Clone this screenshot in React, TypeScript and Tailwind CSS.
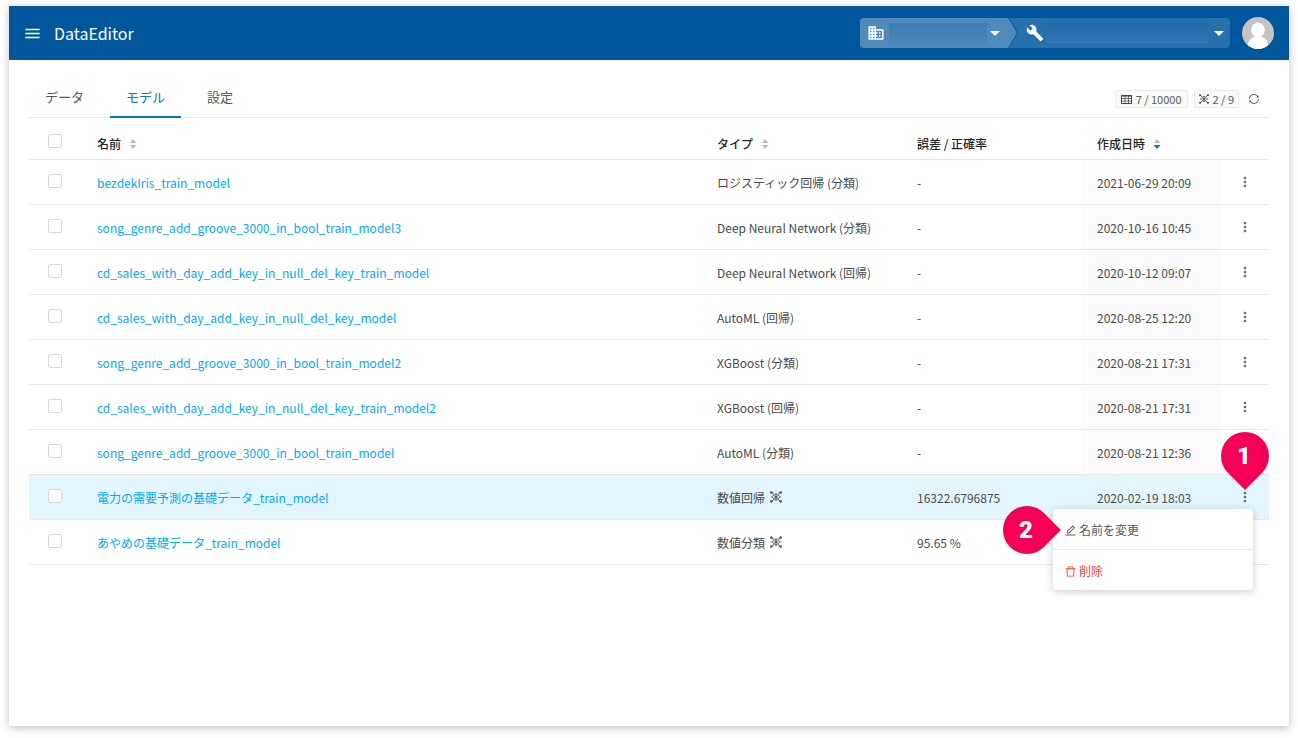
import clsx from 'clsx';
import { MdBusiness, MdBuild, MdMenu, MdMoreVert } from 'react-icons/md';
import { AiOutlineDelete, AiOutlineEdit, AiOutlineSync } from 'react-icons/ai';

type Model = {
  name: string;
  type: string;
  score: string;
  createdAt: string;
  network?: boolean;
  menuOpen?: boolean;
};

const models: Model[] = [
  { name: 'bezdekIris_train_model', type: 'ロジスティック回帰 (分類)', score: '-', createdAt: '2021-06-29 20:09' },
  { name: 'song_genre_add_groove_3000_in_bool_train_model3', type: 'Deep Neural Network (分類)', score: '-', createdAt: '2020-10-16 10:45' },
  { name: 'cd_sales_with_day_add_key_in_null_del_key_train_model', type: 'Deep Neural Network (回帰)', score: '-', createdAt: '2020-10-12 09:07' },
  { name: 'cd_sales_with_day_add_key_in_null_del_key_model', type: 'AutoML (回帰)', score: '-', createdAt: '2020-08-25 12:20' },
  { name: 'song_genre_add_groove_3000_in_bool_train_model2', type: 'XGBoost (分類)', score: '-', createdAt: '2020-08-21 17:31' },
  { name: 'cd_sales_with_day_add_key_in_null_del_key_train_model2', type: 'XGBoost (回帰)', score: '-', createdAt: '2020-08-21 17:31' },
  { name: 'song_genre_add_groove_3000_in_bool_train_model', type: 'AutoML (分類)', score: '-', createdAt: '2020-08-21 12:36' },
  { name: '電力の需要予測の基礎データ_train_model', type: '数値回帰', score: '16322.6796875', createdAt: '2020-02-19 18:03', network: true, menuOpen: true },
  { name: 'あやめの基礎データ_train_model', type: '数値分類', score: '95.65 %', createdAt: '', network: true },
];

function NetworkIcon({ className }: { className?: string }) {
  return (
    <svg viewBox="0 0 12 12" className={className} fill="none" stroke="currentColor" aria-hidden="true">
      <path d="M1 1l3.4 3M11 1L7.6 4M1 11l3.4-3M11 11L7.6 8" strokeWidth="1" />
      <path d="M1.5 6L6 3l4.5 3L6 9z" strokeWidth="0.8" />
      <g fill="currentColor" stroke="none">
        <circle cx="1.3" cy="1.5" r="1.2" />
        <circle cx="10.7" cy="1.5" r="1.2" />
        <circle cx="1.3" cy="10.5" r="1.2" />
        <circle cx="10.7" cy="10.5" r="1.2" />
        <circle cx="6" cy="6" r="1.5" />
        <circle cx="6" cy="3" r="0.8" />
        <circle cx="6" cy="9" r="0.8" />
      </g>
    </svg>
  );
}

function TableIcon() {
  return (
    <svg viewBox="0 0 11 9" className="h-[9px] w-[11px]" fill="none" stroke="#444" aria-hidden="true">
      <path d="M.5 .5h10v8h-10zM0 1h11" />
      <path d="M0 3.5h11M0 6h11M4 0v9M7.5 0v9" strokeWidth="0.7" />
    </svg>
  );
}

function SortIcon({ active }: { active?: boolean }) {
  return (
    <svg viewBox="0 0 8 10" className="h-[10px] w-2" aria-hidden="true">
      <path d="M4 0l3.5 4h-7z" fill="#bfbfbf" />
      <path d="M4 10L.5 6h7z" fill={active ? '#0277bd' : '#bfbfbf'} />
    </svg>
  );
}

function Caret() {
  return (
    <svg viewBox="0 0 10 5" className="h-[5px] w-[10px] shrink-0" aria-hidden="true">
      <path d="M0 0h10L5 5z" fill="#fff" />
    </svg>
  );
}

function Checkbox({ label }: { label: string }) {
  return (
    <input
      type="checkbox"
      aria-label={label}
      className="block size-[14px] appearance-none rounded-xs border border-[#d9d9d9] bg-white"
    />
  );
}

function Pin({ label, direction }: { label: string; direction: 'down' | 'right' }) {
  return (
    <span className="relative flex size-12 items-center justify-center font-[Roboto,sans-serif] text-2xl font-black text-white">
      <span
        className={clsx(
          'absolute inset-0 rotate-45 rounded-full bg-[#f50057]',
          direction === 'down' ? 'rounded-br-none' : 'rounded-tr-none',
        )}
      />
      <span className="relative pr-[2px]">{label}</span>
    </span>
  );
}

function RowMenu() {
  return (
    <div className="absolute top-[34px] right-4 z-10 w-[200px] rounded-sm bg-white shadow-[0_2px_8px_rgba(0,0,0,0.2)]">
      <button className="flex h-10 w-full items-center gap-[2px] px-[11px] pt-[2px] text-[#595959]">
        <AiOutlineEdit size={13} />
        名前を変更
      </button>
      <button className="flex h-[41px] w-full items-center gap-[2px] border-t border-[#e8e8e8] px-[11px] pt-[2px] text-[#f44336]">
        <AiOutlineDelete size={13} />
        削除
      </button>
      <div className="absolute -top-[3px] -left-[50px]">
        <Pin label="2" direction="right" />
      </div>
    </div>
  );
}

function Header() {
  return (
    <header className="flex h-[54px] items-center bg-[#00579c] pr-[15px] pl-[14px] text-white">
      <button aria-label="メニュー">
        <MdMenu size={19} />
      </button>
      <h1 className="ml-3 text-base">DataEditor</h1>
      <div className="ml-auto flex h-[30px]">
        <div className="flex w-[157px] items-center rounded-l-sm bg-[#4f8abb] pl-[7px] [clip-path:polygon(0_0,148px_0,100%_50%,148px_100%,0_100%)]">
          <MdBusiness size={18} />
          <select aria-label="組織" className="ml-1 h-5 w-[98px] appearance-none bg-linear-to-b from-[#3c7db4] to-[#4a87ba]">
            <option></option>
          </select>
          <span className="ml-[3px]">
            <Caret />
          </span>
        </div>
        <div className="-ml-2 flex w-[221px] items-center rounded-r-sm bg-[#2870ab] pl-[17px] [clip-path:polygon(0_0,100%_0,100%_100%,0_100%,9px_50%)]">
          <MdBuild size={18} />
          <select aria-label="プロジェクト" className="ml-[3px] h-5 w-[161px] appearance-none bg-linear-to-b from-[#1f69a8] to-[#3376b0]">
            <option></option>
          </select>
          <span className="ml-[6px]">
            <Caret />
          </span>
        </div>
      </div>
      <button aria-label="アカウント" className="ml-3">
        <svg viewBox="0 0 32 32" className="size-8">
          <clipPath id="avatar">
            <circle cx="16" cy="16" r="16" />
          </clipPath>
          <g clipPath="url(#avatar)">
            <path d="M0 0h32v32H0z" fill="#c4c4c4" />
            <ellipse cx="16" cy="13" rx="6.8" ry="7.5" fill="#fff" />
            <ellipse cx="16" cy="29" rx="10.5" ry="10" fill="#fff" />
          </g>
        </svg>
      </button>
    </header>
  );
}

function Tabs() {
  return (
    <div className="flex h-[58px] items-end border-b border-[#e8e8e8]">
      <nav className="-mb-px flex gap-[10px] text-[13px] text-[#595959]">
        <a href="#data" className="h-[42px] px-4 pt-[11px] leading-5">データ</a>
        <a href="#models" className="h-[42px] border-b-2 border-[#0277bd] px-4 pt-[11px] leading-5 text-[#0277bd]">モデル</a>
        <a href="#settings" className="h-[42px] px-4 pt-[11px] leading-5">設定</a>
      </nav>
      <div className="mb-[9px] ml-auto flex items-center gap-[6px] pr-[9px] text-[11px] text-[#595959]">
        <span className="flex h-[18px] items-center gap-1 rounded-xs border border-[#ececec] bg-[#fafafa] px-[5px]">
          <TableIcon />7 / 10000
        </span>
        <span className="flex h-[18px] items-center gap-1 rounded-xs border border-[#ececec] bg-[#fafafa] px-1">
          <NetworkIcon className="size-[10px] text-[#444]" />2 / 9
        </span>
        <button aria-label="更新" className="ml-[3px]">
          <AiOutlineSync size={12} />
        </button>
      </div>
    </div>
  );
}

function ModelTable() {
  return (
    <table className="w-full table-fixed border-separate border-spacing-0 text-[#4a4a4a]">
      <colgroup>
        <col className="w-[52px]" />
        <col />
        <col className="w-[200px]" />
        <col className="w-[180px]" />
        <col className="w-[140px]" />
        <col className="w-12" />
      </colgroup>
      <thead>
        <tr className="h-[42px] text-left text-[#262626] *:border-b *:border-[#e8e8e8] *:font-medium">
          <td className="pt-2 pb-1 pl-[19px]">
            <Checkbox label="すべて選択" />
          </td>
          <th className="px-4 pt-[10px]">
            <span className="flex items-center gap-2">名前 <SortIcon /></span>
          </th>
          <th className="px-4 pt-[10px]">
            <span className="flex items-center gap-2">タイプ <SortIcon /></span>
          </th>
          <th className="px-4 pt-[10px]">誤差 / 正確率</th>
          <th className="px-4 pt-[10px]">
            <span className="flex items-center gap-2">作成日時 <SortIcon active /></span>
          </th>
          <td></td>
        </tr>
      </thead>
      <tbody>
        {models.map((model) => (
          <tr
            key={model.name}
            className={clsx('h-[45px] *:border-b *:border-[#e8e8e8]', model.menuOpen && 'bg-[#e3f6fd]')}
          >
            <td className="pb-[2px] pl-[19px]">
              <Checkbox label={model.name} />
            </td>
            <td className="px-4 pt-[2px]">
              <a href="#model" className="text-[#03a9f4]">{model.name}</a>
            </td>
            <td className="px-4 pt-[2px]">
              <span className="flex items-center gap-[5px]">
                {model.type}
                {model.network && <NetworkIcon className="mb-[2px] size-3" />}
              </span>
            </td>
            <td className="px-4 pt-[2px]">{model.score}</td>
            <td className={clsx('px-4 pt-[2px]', !model.menuOpen && 'bg-[#fbfbfb]')}>{model.createdAt}</td>
            <td className="relative">
              <button aria-label="操作" className="mx-auto block text-[#6b6b6b]">
                <MdMoreVert size={16} />
              </button>
              {model.menuOpen && (
                <>
                  <div className="absolute -top-[43px] left-0">
                    <Pin label="1" direction="down" />
                  </div>
                  <RowMenu />
                </>
              )}
            </td>
          </tr>
        ))}
      </tbody>
    </table>
  );
}

function App() {
  return (
    <div className="flex min-h-screen flex-col bg-white px-[9px] pt-[6px] pb-3 font-['Noto_Sans_CJK_JP',sans-serif] text-xs">
      <div className="flex-1 bg-white shadow-[0_2px_8px_rgba(0,0,0,0.25)]">
        <Header />
        <main className="px-5">
          <Tabs />
          <ModelTable />
        </main>
      </div>
    </div>
  );
}

export default App;
